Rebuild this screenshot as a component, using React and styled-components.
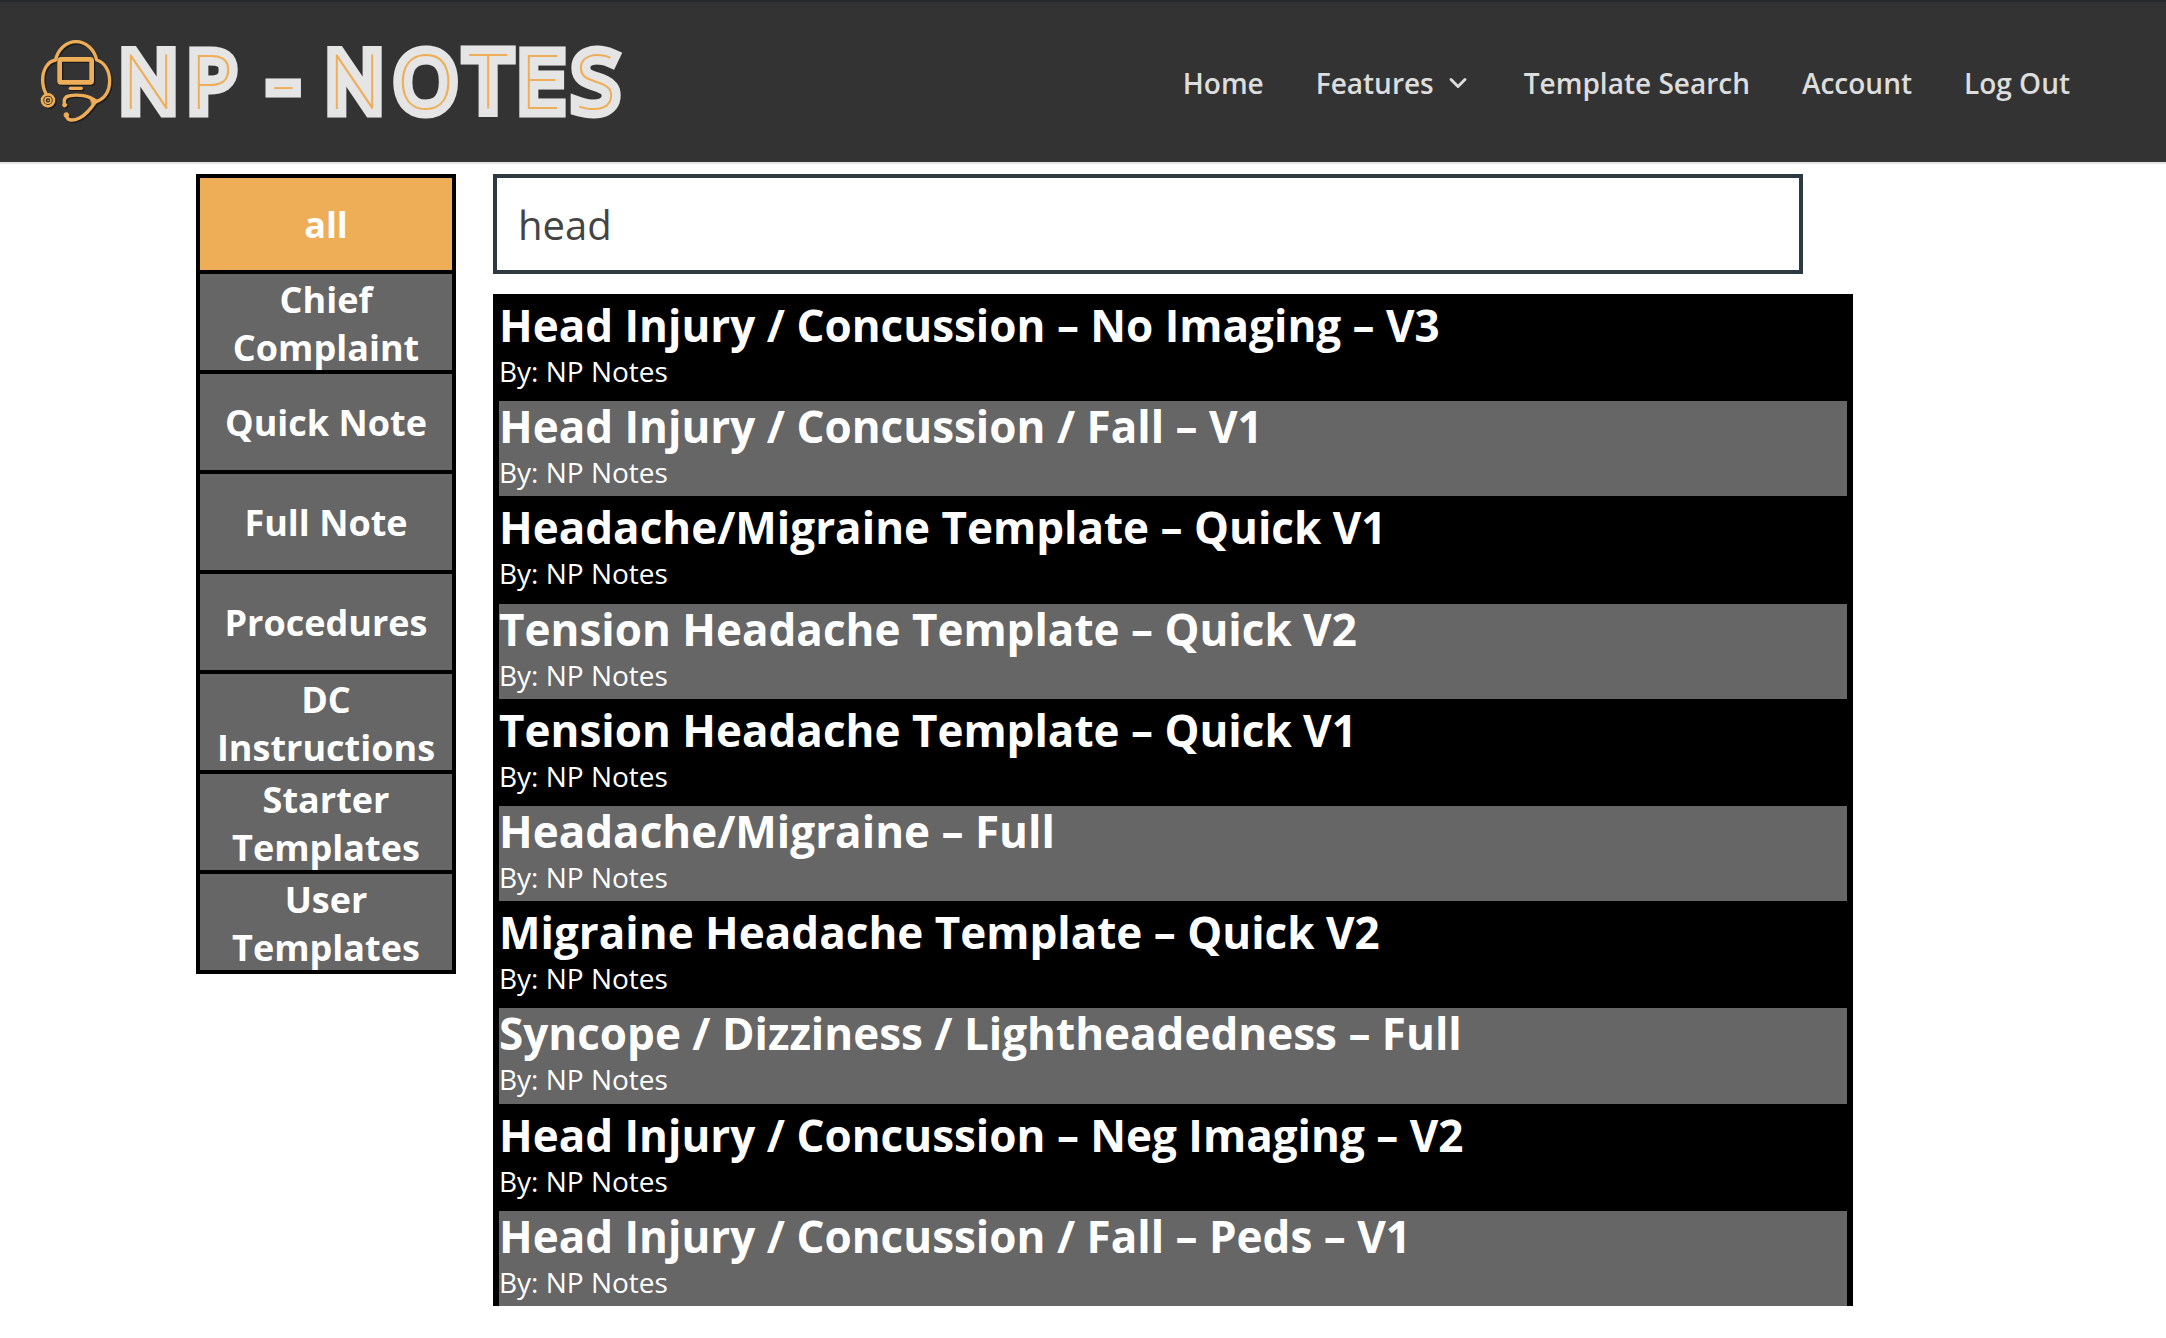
import { useState } from 'react';
import styled, { createGlobalStyle, ThemeProvider } from 'styled-components';
import { ChevronDown } from 'lucide-react';

const theme = {
  brand: '#eeae57',
  header: '#333333',
  headerText: '#dddddd',
  tile: '#666666',
  field: '#2d3a42',
};

const GlobalStyle = createGlobalStyle`
  *, *::before, *::after {
    box-sizing: border-box;
  }
  body {
    margin: 0;
    background: #fff;
    font-family: 'Open Sans', 'Noto Sans', sans-serif;
  }
  h2, p, ul {
    margin: 0;
    padding: 0;
  }
`;

const StyledHeader = styled.header`
  display: flex;
  align-items: center;
  justify-content: space-between;
  height: 164px;
  padding: 0 96px 0 40px;
  background: ${({ theme }) => theme.header};
  border-top: 2px solid #23292d;
  border-bottom: 2px solid #e5e5e5;
`;
const StyledLogoLink = styled.a`
  display: flex;
`;
const StyledWordmark = styled.text`
  font-family: 'Noto Sans', sans-serif;
  font-size: 76px;
  font-weight: 100;
  fill: ${({ theme }) => theme.brand};
  stroke: #e5e5e5;
  stroke-width: 17px;
  stroke-linejoin: miter;
  stroke-miterlimit: 2;
  paint-order: stroke;
`;
const StyledNav = styled.nav`
  display: flex;
  gap: 52px;
  padding-top: 2px;
`;
const StyledNavLink = styled.a`
  display: flex;
  align-items: center;
  gap: 10px;
  color: ${({ theme }) => theme.headerText};
  font-size: 28px;
  font-weight: 600;
  line-height: 40px;
  text-decoration: none;
`;

const StyledMain = styled.main`
  display: flex;
  align-items: flex-start;
  gap: 37px;
  padding: 10px 196px 0;
`;
const StyledSidebar = styled.aside`
  display: flex;
  flex-direction: column;
  flex: 0 0 260px;
  border-top: 4px solid #000;
`;
const StyledCategory = styled.button`
  height: 100px;
  padding: 2px 8px 0;
  border: 4px solid #000;
  border-top: 0;
  background: ${({ $active, theme }) => ($active ? theme.brand : theme.tile)};
  color: #fff;
  font-family: inherit;
  font-size: 36px;
  font-weight: 700;
  line-height: 48px;
  cursor: pointer;
  &:first-child {
    height: 96px;
  }
`;
const StyledContent = styled.section`
  flex: 1;
  min-width: 0;
  max-width: 1360px;
`;
const StyledSearch = styled.input`
  display: block;
  width: calc(100% - 50px);
  height: 100px;
  padding: 0 21px;
  border: 4px solid ${({ theme }) => theme.field};
  border-radius: 0;
  background: #fff;
  color: #444;
  font-family: inherit;
  font-size: 40px;
  outline: none;
`;
const StyledResults = styled.ul`
  display: grid;
  grid-auto-rows: minmax(94px, 1fr);
  gap: 6px;
  height: calc(100vh - 326px);
  margin-top: 20px;
  overflow: hidden;
  border: 6px solid #000;
  border-bottom: 0;
  background: #000;
  list-style: none;
`;
const StyledResult = styled.li`
  color: #fff;
  &:nth-child(even) {
    background: ${({ theme }) => theme.tile};
  }
`;
const StyledResultTitle = styled.h2`
  font-size: 44px;
  font-weight: 700;
  line-height: 50px;
`;
const StyledResultAuthor = styled.p`
  font-size: 28px;
  line-height: 43px;
`;

const CATEGORIES = [
  'all',
  'Chief Complaint',
  'Quick Note',
  'Full Note',
  'Procedures',
  'DC Instructions',
  'Starter Templates',
  'User Templates',
];

const TEMPLATES = [
  'Head Injury / Concussion – No Imaging – V3',
  'Head Injury / Concussion / Fall – V1',
  'Headache/Migraine Template – Quick V1',
  'Tension Headache Template – Quick V2',
  'Tension Headache Template – Quick V1',
  'Headache/Migraine – Full',
  'Migraine Headache Template – Quick V2',
  'Syncope / Dizziness / Lightheadedness – Full',
  'Head Injury / Concussion – Neg Imaging – V2',
  'Head Injury / Concussion / Fall – Peds – V1',
];

// stethoscope wrapped round a monitor, drawn at three times its final size
const StethoscopeShape = ({ color }) => (
  <g fill="none" stroke={color} strokeWidth="10" strokeLinecap="round" strokeLinejoin="round">
    <path d="M138 281C131 268 128 257 128 240C128 211 141 185 167 180C173 149 198 125 228 125C258 125 284 150 290 180C313 187 329 211 329 242C329 275 313 298 288 305" />
    <rect x="179" y="178" width="96" height="69" rx="4" strokeWidth="14" />
    <path d="M211 265H244" />
    <path d="M193 310C191 298 195 290 207 288C232 282 266 286 288 303C277 320 262 342 240 353C218 364 203 362 200 349" />
    <path d="M270 294L297 302L278 318Z" fill={color} strokeWidth="2" />
    <circle cx="194" cy="315" r="6" fill={color} strokeWidth="3" />
    <circle cx="199" cy="345" r="7" fill={color} strokeWidth="3" />
    <circle cx="144" cy="301" r="18" strokeWidth="8" />
    <circle cx="144" cy="301" r="9" strokeWidth="5" />
    <circle cx="144" cy="301" r="2" strokeWidth="2" />
  </g>
);

const Logo = () => (
  <svg width="590" height="124" viewBox="40 20 590 124" role="img" aria-label="NP - Notes">
    <g transform="scale(0.3333) translate(4 4)">
      <StethoscopeShape color="#1c1c1c" />
    </g>
    <g transform="scale(0.3333)">
      <StethoscopeShape color={theme.brand} />
    </g>
    <StyledWordmark y="109">
      <tspan x="122 190">NP</tspan> <tspan x="271">-</tspan>{' '}
      <tspan x="328 397 469 520 575">NOTES</tspan>
    </StyledWordmark>
  </svg>
);

const Header = () => (
  <StyledHeader>
    <StyledLogoLink href="#home">
      <Logo />
    </StyledLogoLink>
    <StyledNav>
      <StyledNavLink href="#home">Home</StyledNavLink>
      <StyledNavLink href="#features">
        Features
        <ChevronDown size={28} strokeWidth={2.5} />
      </StyledNavLink>
      <StyledNavLink href="#search">Template Search</StyledNavLink>
      <StyledNavLink href="#account">Account</StyledNavLink>
      <StyledNavLink href="#logout">Log Out</StyledNavLink>
    </StyledNav>
  </StyledHeader>
);

const App = () => {
  const [category, setCategory] = useState('all');
  const [query, setQuery] = useState('head');

  return (
    <ThemeProvider theme={theme}>
      <GlobalStyle />
      <Header />
      <StyledMain>
        <StyledSidebar>
          {CATEGORIES.map((name) => (
            <StyledCategory
              key={name}
              type="button"
              $active={name === category}
              onClick={() => setCategory(name)}
            >
              {name}
            </StyledCategory>
          ))}
        </StyledSidebar>
        <StyledContent>
          <StyledSearch
            type="text"
            aria-label="Search templates"
            value={query}
            onChange={(e) => setQuery(e.target.value)}
          />
          <StyledResults>
            {TEMPLATES.map((title) => (
              <StyledResult key={title}>
                <StyledResultTitle>{title}</StyledResultTitle>
                <StyledResultAuthor>By: NP Notes</StyledResultAuthor>
              </StyledResult>
            ))}
          </StyledResults>
        </StyledContent>
      </StyledMain>
    </ThemeProvider>
  );
};

export default App;
